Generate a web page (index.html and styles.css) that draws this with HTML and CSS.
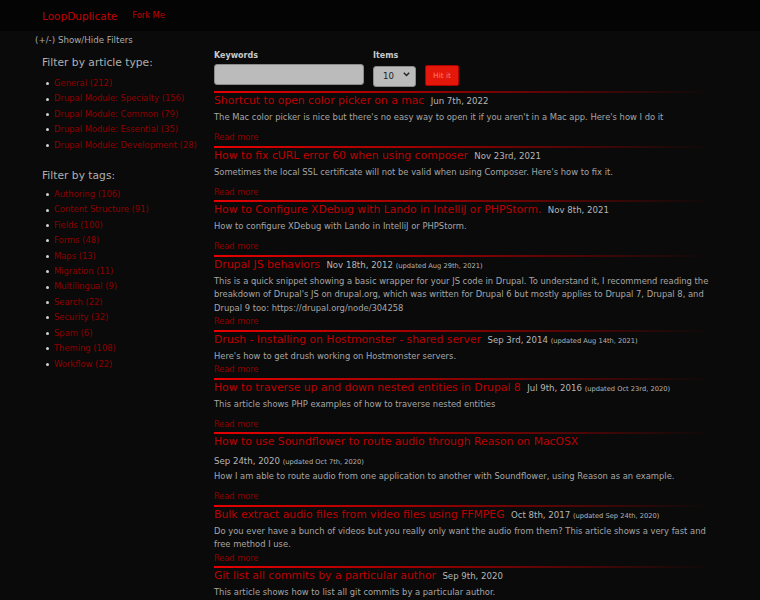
FILE: index.html
```html
<!DOCTYPE html>
<html lang="en">
<head>
<meta charset="utf-8">
<title>LoopDuplicate</title>
<link rel="stylesheet" href="styles.css">
</head>
<body>
<nav class="topbar">
  <a class="brand" href="#">LoopDuplicate</a>
  <a class="fork" href="#">Fork Me</a>
</nav>
<div class="toggle">(+/-) Show/Hide Filters</div>
<div class="layout">
  <aside class="sidebar">
    <h3 class="side-title">Filter by article type:</h3>
    <ul class="filters">
      <li><a href="#">General (212)</a></li>
      <li><a href="#">Drupal Module: Specialty (156)</a></li>
      <li><a href="#">Drupal Module: Common (79)</a></li>
      <li><a href="#">Drupal Module: Essential (35)</a></li>
      <li><a href="#">Drupal Module: Development (28)</a></li>
    </ul>
    <h3 class="side-title tags-title">Filter by tags:</h3>
    <ul class="filters">
      <li><a href="#">Authoring (106)</a></li>
      <li><a href="#">Content Structure (91)</a></li>
      <li><a href="#">Fields (100)</a></li>
      <li><a href="#">Forms (48)</a></li>
      <li><a href="#">Maps (13)</a></li>
      <li><a href="#">Migration (11)</a></li>
      <li><a href="#">Multilingual (9)</a></li>
      <li><a href="#">Search (22)</a></li>
      <li><a href="#">Security (32)</a></li>
      <li><a href="#">Spam (6)</a></li>
      <li><a href="#">Theming (108)</a></li>
      <li><a href="#">Workflow (22)</a></li>
    </ul>
  </aside>
  <main class="main">
    <form class="search">
      <div class="field">
        <label class="label">Keywords</label>
        <input class="keywords" type="text">
      </div>
      <div class="field">
        <label class="label">Items</label>
        <span class="select-wrap">
          <select class="items"><option>10</option><option>20</option></select>
          <svg class="chevron" width="7" height="5" viewBox="0 0 7 5"><path d="M0.8 0.8 L3.5 3.6 L6.2 0.8" fill="none" stroke="#222" stroke-width="1.4"/></svg>
        </span>
      </div>
      <button class="hit" type="button">Hit it</button>
    </form>

    <article class="post">
      <h2 class="post-title"><a href="#">Shortcut to open color picker on a mac</a> <span class="date">Jun 7th, 2022</span></h2>
      <p class="desc gap">The Mac color picker is nice but there's no easy way to open it if you aren't in a Mac app. Here's how I do it</p>
      <a class="more" href="#">Read more</a>
    </article>

    <article class="post">
      <h2 class="post-title"><a href="#">How to fix cURL error 60 when using composer</a> <span class="date">Nov 23rd, 2021</span></h2>
      <p class="desc gap">Sometimes the local SSL certificate will not be valid when using Composer. Here's how to fix it.</p>
      <a class="more" href="#">Read more</a>
    </article>

    <article class="post">
      <h2 class="post-title"><a href="#">How to Configure XDebug with Lando in IntelliJ or PHPStorm.</a> <span class="date">Nov 8th, 2021</span></h2>
      <p class="desc gap">How to configure XDebug with Lando in IntelliJ or PHPStorm.</p>
      <a class="more" href="#">Read more</a>
    </article>

    <article class="post">
      <h2 class="post-title"><a href="#">Drupal JS behaviors</a> <span class="date">Nov 18th, 2012 <small class="updated">(updated Aug 29th, 2021)</small></span></h2>
      <p class="desc">This is a quick snippet showing a basic wrapper for your JS code in Drupal. To understand it, I recommend reading the breakdown of Drupal's JS on drupal.org, which was written for Drupal 6 but mostly applies to Drupal 7, Drupal 8, and Drupal 9 too: https://drupal.org/node/304258</p>
      <a class="more" href="#">Read more</a>
    </article>

    <article class="post">
      <h2 class="post-title"><a href="#">Drush - Installing on Hostmonster - shared server</a> <span class="date">Sep 3rd, 2014 <small class="updated">(updated Aug 14th, 2021)</small></span></h2>
      <p class="desc">Here's how to get drush working on Hostmonster servers.</p>
      <a class="more" href="#">Read more</a>
    </article>

    <article class="post">
      <h2 class="post-title"><a href="#">How to traverse up and down nested entities in Drupal 8</a> <span class="date">Jul 9th, 2016 <small class="updated">(updated Oct 23rd, 2020)</small></span></h2>
      <p class="desc gap">This article shows PHP examples of how to traverse nested entities</p>
      <a class="more" href="#">Read more</a>
    </article>

    <article class="post">
      <h2 class="post-title"><a href="#">How to use Soundflower to route audio through Reason on MacOSX</a> <span class="date date-wrapped">Sep 24th, 2020 <small class="updated">(updated Oct 7th, 2020)</small></span></h2>
      <p class="desc gap">How I am able to route audio from one application to another with Soundflower, using Reason as an example.</p>
      <a class="more" href="#">Read more</a>
    </article>

    <article class="post">
      <h2 class="post-title"><a href="#">Bulk extract audio files from video files using FFMPEG</a> <span class="date">Oct 8th, 2017 <small class="updated">(updated Sep 24th, 2020)</small></span></h2>
      <p class="desc">Do you ever have a bunch of videos but you really only want the audio from them? This article shows a very fast and free method I use.</p>
      <a class="more" href="#">Read more</a>
    </article>

    <article class="post">
      <h2 class="post-title"><a href="#">Git list all commits by a particular author</a> <span class="date">Sep 9th, 2020</span></h2>
      <p class="desc gap">This article shows how to list all git commits by a particular author.</p>
      <a class="more" href="#">Read more</a>
    </article>
  </main>
</div>
</body>
</html>
```

FILE: styles.css
```css
html, body {
  margin: 0;
  padding: 0;
  background: #0a0a0a;
}
body {
  font-family: "DejaVu Sans", Verdana, sans-serif;
  color: #a6a6a6;
}
a {
  text-decoration: none;
}

.topbar {
  height: 31px;
  background: #040404;
  display: flex;
  align-items: center;
  padding-left: 42px;
  gap: 15px;
}
.brand {
  color: #c30000;
  font-size: 10.5px;
}
.fork {
  color: #c30000;
  font-size: 8.3px;
  margin-top: -1px;
}

.toggle {
  font-size: 8.7px;
  line-height: 12px;
  margin-top: 3px;
  padding-left: 35px;
  color: #a9a9a9;
}

.layout {
  display: flex;
  align-items: flex-start;
}

.sidebar {
  width: 172px;
  padding-left: 42px;
  flex-shrink: 0;
}
.side-title {
  font-weight: normal;
  font-size: 10.7px;
  line-height: 14px;
  color: #b0b0b0;
  margin: 10px 0 6px;
}
.tags-title {
  margin-top: 16px;
  margin-bottom: 4px;
}
.filters {
  list-style: none;
  margin: 0;
  padding: 0;
}
.filters li {
  display: flex;
  align-items: center;
  font-size: 8.4px;
  line-height: 15.4px;
  padding-left: 4px;
}
.filters li::before {
  content: "";
  width: 3px;
  height: 3px;
  border-radius: 50%;
  background: #d0d0d0;
  margin-right: 5px;
}
.filters a {
  color: #8e0000;
}

.main {
  width: 497px;
  flex-shrink: 0;
}

.search {
  display: flex;
  align-items: flex-end;
  gap: 9px;
  margin-top: 5px;
  margin-bottom: 6px;
}
.field {
  display: flex;
  flex-direction: column;
}
.label {
  font-size: 8px;
  font-weight: bold;
  line-height: 10px;
  color: #c8c8c8;
  margin-bottom: 3px;
}
.keywords {
  width: 150px;
  height: 21px;
  box-sizing: border-box;
  background: #bbbbbb;
  border: 1px solid #8a8a8a;
  border-radius: 3px;
  margin: 0;
}
.select-wrap {
  position: relative;
  display: block;
  width: 43px;
  height: 21px;
}
.items {
  appearance: none;
  -webkit-appearance: none;
  width: 43px;
  height: 21px;
  box-sizing: border-box;
  background: #bbbbbb;
  border: 1px solid #8a8a8a;
  border-radius: 3px;
  font-family: "DejaVu Sans", sans-serif;
  font-size: 8.6px;
  color: #222;
  padding: 0 0 0 9px;
  margin: 0;
}
.chevron {
  position: absolute;
  right: 6px;
  top: 8px;
}
.hit {
  width: 34px;
  height: 21px;
  margin: 0 0 -1px;
  padding: 0;
  border: 1px solid #a00;
  border-radius: 2px;
  background: #e3170a;
  color: #ff7e6e;
  font-family: "DejaVu Sans", sans-serif;
  font-size: 7.4px;
}

.post {
  padding-bottom: 1px;
}
.post::before {
  content: "";
  display: block;
  height: 2px;
  background: linear-gradient(to right, #e80000 0%, #a00000 40%, #0a0a0a 100%);
}
.post-title {
  font-weight: normal;
  font-size: 10.8px;
  line-height: 14px;
  margin: 1px 0 0;
}
.post-title a {
  color: #bd0000;
}
.date {
  display: inline-block;
  font-size: 8.6px;
  line-height: 12px;
  color: #b5b5b5;
  margin-left: 3px;
}
.date-wrapped {
  display: block;
  margin-left: 0;
  margin-top: 6px;
}
.updated {
  font-size: 6.7px;
  line-height: 1;
}
.desc {
  font-size: 8.4px;
  line-height: 13.5px;
  margin: 3px 0 0;
}
.desc.gap {
  margin-bottom: 6.5px;
}
.more {
  display: block;
  font-size: 8.2px;
  line-height: 13.5px;
  color: #900000;
}
```
